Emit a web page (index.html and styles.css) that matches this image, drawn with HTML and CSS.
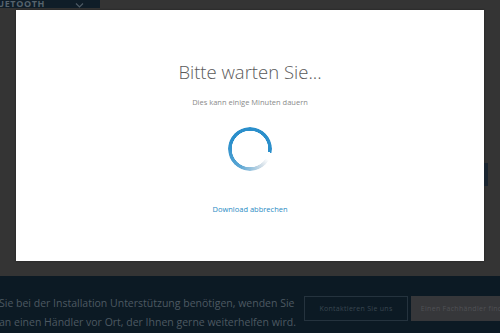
FILE: index.html
```html
<!DOCTYPE html>
<html lang="de">
<head>
  <meta charset="UTF-8">
  <meta name="viewport" content="width=device-width,initial-scale=1.0">
  <title>Bitte warten Sie...</title>
  <link rel="stylesheet" href="styles.css">
</head>
<body>
  <!-- oberer Reiter (hinter dem Overlay) -->
  <div class="topbar">
    <div class="tab">
      <span class="tab-label">Bluetooth</span>
      <span class="tab-chevron">
        <svg width="9" height="5" viewBox="0 0 9 5"><path d="M1 0.5 L4.5 4 L8 0.5" fill="none" stroke="#4d5a64" stroke-width="1.2"/></svg>
      </span>
    </div>
  </div>

  <!-- Dialog -->
  <div class="modal-row">
    <div class="modal">
      <h1 class="modal-title">Bitte warten Sie...</h1>
      <p class="modal-sub">Dies kann einige Minuten dauern</p>
      <div class="spinner"></div>
      <a class="cancel-link" href="#">Download abbrechen</a>
    </div>
    <div class="side-strip"><span class="side-block"></span></div>
  </div>

  <!-- Fußzeile -->
  <div class="footer">
    <div class="footer-text">
      Sie bei der Installation Unterstützung benötigen, wenden Sie<br>
      an einen Händler vor Ort, der Ihnen gerne weiterhelfen wird.
    </div>
    <div class="footer-buttons">
      <a class="btn btn-outline" href="#">Kontaktieren Sie uns</a>
      <a class="btn btn-fill" href="#">Einen Fachhändler finden</a>
    </div>
  </div>
</body>
</html>
```

FILE: styles.css
```css
html, body { margin: 0; padding: 0; }
body { width: 500px; height: 333px; overflow: hidden; background: #343434; font-family: "Open Sans", "Liberation Sans", sans-serif; }

.topbar { height: 10px; }
.tab { width: 100px; height: 8px; background: #0f1d28; display: flex; align-items: flex-end; overflow: hidden; }
.tab-label { margin-left: -15px; margin-bottom: -1px; font-size: 9px; line-height: 10px; font-weight: bold; letter-spacing: 0.6px; text-transform: uppercase; color: #56636d; }
.tab-chevron { margin-left: 30px; display: flex; align-items: flex-end; height: 8px; }

.modal-row { display: flex; height: 251px; }
.modal { margin-left: 16px; width: 468px; background: #fff; box-shadow: 0 0 2px rgba(0,0,0,0.4); display: flex; flex-direction: column; align-items: center; }
.modal-title { margin: 49px 0 0; font-size: 18.5px; line-height: 26px; font-weight: 300; color: #5a5a5a; }
.modal-sub { margin: 12px 0 0; font-size: 7.5px; line-height: 10px; color: #8a8a8a; }
.spinner { margin-top: 20px; width: 44px; height: 44px; border-radius: 50%;
  background: conic-gradient(from 100deg, rgba(43,143,203,0) 0deg, rgba(43,143,203,0) 20deg, rgba(180,200,215,0.6) 45deg, #5aa6d4 110deg, #2b8fcb 190deg, #2b8fcb 360deg);
  -webkit-mask: radial-gradient(circle, transparent 18px, #000 18.5px);
  mask: radial-gradient(circle, transparent 18px, #000 18.5px); }
.cancel-link { margin-top: 33px; font-size: 7.5px; line-height: 10px; color: #2a8bc4; text-decoration: none; }

.side-strip { flex: 1; padding-top: 153px; }
.side-block { display: block; width: 4px; height: 23px; background: #1a2530; }

.footer { margin-top: 15px; height: 57px; background: #0c1a24; display: flex; align-items: flex-start; }
.footer-text { width: 305px; flex: none; margin-top: 18px; margin-left: -1px; font-size: 10.5px; line-height: 19px; color: #4d5962; white-space: nowrap; }
.footer-buttons { display: flex; gap: 3px; margin-top: 20px; flex: none; }
.btn { height: 25px; box-sizing: border-box; display: flex; align-items: center; justify-content: center; font-size: 7px; letter-spacing: 0.3px; text-decoration: none; }
.btn-outline { width: 104px; border: 1px solid #25333e; color: #3a4751; }
.btn-fill { width: 110px; background: #36373a; color: #505155; }
```
